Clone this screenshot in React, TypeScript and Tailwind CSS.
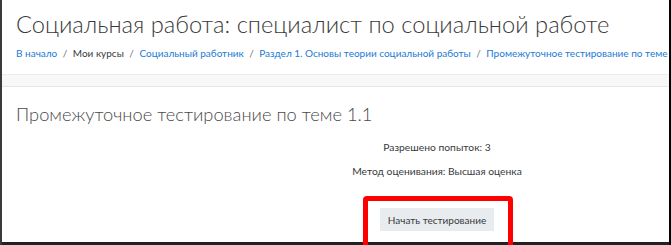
import React from "react"

const crumbs = [
  { label: "В начало", link: true },
  { label: "Мои курсы", link: false },
  { label: "Социальный работник", link: true },
  { label: "Раздел 1. Основы теории социальной работы", link: true },
  { label: "Промежуточное тестирование по теме 1.1", link: true },
]

function Breadcrumb() {
  return (
    <nav className="flex items-center whitespace-nowrap text-[10px] leading-[16px]">
      {crumbs.map((c, i) => (
        <span key={i} className="flex items-center">
          {i > 0 && <span className="mx-[5.5px] text-[#6c757d]">/</span>}
          <span className={c.link ? "text-[#1a7bd6]" : "text-[#373a3c]"}>{c.label}</span>
        </span>
      ))}
    </nav>
  )
}

export default function App() {
  return (
    <div className="flex h-[245px] w-[671px] flex-col overflow-hidden border-l-2 border-r-2 border-l-[#3a3a3a] border-r-black bg-white font-['Lato',sans-serif] text-[#373a3c]">
      <header className="h-[75px] shrink-0 overflow-hidden border-b border-[#ececec] pl-[14px] pt-[9px]">
        <h1 className="whitespace-nowrap text-[23.7px] font-light leading-[30px] text-[#3a3a3a]">
          Социальная работа: специалист по социальной работе
        </h1>
        <div className="mt-[6px]">
          <Breadcrumb />
        </div>
      </header>

      <div className="h-[11px] shrink-0 bg-[#f8f8f8]" />

      <main className="flex-1 border-t border-[#e6e6e6] pl-[14px] pt-[13px]">
        <h2 className="whitespace-nowrap text-[18.3px] font-light leading-[28px] text-[#4a4a4a]">
          Промежуточное тестирование по теме 1.1
        </h2>
        <div className="ml-[186px] flex w-[470px] flex-col items-center text-[10.3px] leading-[16px] text-[#373a3c]">
          <p className="mt-[11px]">Разрешено попыток: 3</p>
          <p className="mt-[8px]">Метод оценивания: Высшая оценка</p>
          <div className="relative mt-[29px]">
            <div className="absolute left-[-17px] right-[-19px] top-[-12px] z-10 h-[60px] rounded-[4px] border-[5px] border-[#ff0000]" />
            <button className="h-[23px] whitespace-nowrap bg-[#e9ecef] px-[8px] text-[10px] text-[#373a3c]">
              Начать тестирование
            </button>
          </div>
        </div>
      </main>

      <div className="h-[3px] shrink-0 bg-[#222]" />
    </div>
  )
}
